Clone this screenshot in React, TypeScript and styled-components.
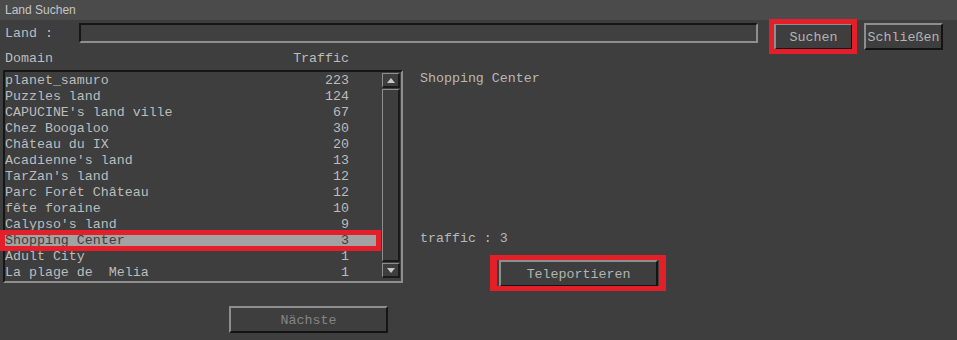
import React from "react";
import styled, { createGlobalStyle } from "styled-components";

const Global = createGlobalStyle`
  html, body { margin: 0; padding: 0; background: #3e3e3e; }
  body { width: 957px; height: 340px; overflow: hidden; }
`;

const mono = `"Liberation Mono", "Courier New", monospace`;

const Window = styled.div`
  width: 957px;
  height: 340px;
  background: #3e3e3e;
  display: flex;
  flex-direction: column;
  font-family: ${mono};
  font-size: 13.3px;
  color: #bcbcbc;
`;

const TitleBar = styled.div`
  height: 20px;
  line-height: 21px;
  background: #4b4b4b;
  padding-left: 5px;
  font-family: "Liberation Sans", Arial, sans-serif;
  font-size: 12px;
  color: #c6c6c6;
`;

const SearchRow = styled.div`
  display: flex;
  align-items: flex-start;
  padding: 3px 0 0 5px;
  height: 27px;
`;

const Label = styled.div`
  width: 74px;
  height: 20px;
  line-height: 22px;
`;

const TextInput = styled.div`
  box-sizing: border-box;
  width: 679px;
  height: 20px;
  background: #404040;
  border-style: solid;
  border-width: 2px;
  border-color: #161616 #8e8e8e #8e8e8e #161616;
`;

const Button = styled.button<{ $w: number; $ml: number; $dim?: boolean }>`
  position: relative;
  box-sizing: border-box;
  width: ${(p) => p.$w}px;
  height: 27px;
  margin-left: ${(p) => p.$ml}px;
  padding: 1px 0 0;
  background: #3e3e3e;
  border-style: solid;
  border-width: 2px;
  border-color: #8e8e8e #141414 #141414 #8e8e8e;
  font-family: ${mono};
  font-size: 13.3px;
  color: ${(p) => (p.$dim ? "#858585" : "#b4b4b4")};
  white-space: nowrap;
`;

const Highlight = styled.span<{ $t: number; $r: number; $b: number; $l: number; $bw?: string }>`
  position: absolute;
  top: ${(p) => -p.$t}px;
  right: ${(p) => -p.$r}px;
  bottom: ${(p) => -p.$b}px;
  left: ${(p) => -p.$l}px;
  border: solid #e3202a;
  border-width: ${(p) => p.$bw ?? "5px"};
  pointer-events: none;
`;

const Main = styled.div`
  display: flex;
  padding-left: 3px;
  gap: 17px;
`;

const LeftColumn = styled.div`
  width: 400px;
  display: flex;
  flex-direction: column;
`;

const HeaderRow = styled.div`
  height: 16px;
  line-height: 18px;
  display: flex;
  justify-content: space-between;
  padding: 0 54px 0 2px;
  color: #bcbcbc;
`;

const ListBox = styled.div`
  box-sizing: border-box;
  margin-top: 4px;
  height: 213px;
  border-style: solid;
  border-width: 2px;
  border-color: #161616 #8e8e8e #8e8e8e #161616;
  display: flex;
`;

const Rows = styled.div`
  flex: 1;
  display: flex;
  flex-direction: column;
`;

const Row = styled.div<{ $selected?: boolean }>`
  position: relative;
  height: 16px;
  line-height: 18px;
  display: flex;
  justify-content: space-between;
  padding-right: 31px;
  white-space: pre;
  background: ${(p) => (p.$selected ? "#a2a2a2" : "transparent")};
  color: ${(p) => (p.$selected ? "#3c3c3c" : "#bcbcbc")};
`;

const ScrollBar = styled.div`
  width: 18px;
  margin: 1px 1px 3px 2px;
  display: flex;
  flex-direction: column;
`;

const ScrollButton = styled.div`
  box-sizing: border-box;
  height: 15px;
  border-style: solid;
  border-width: 1px 2px 2px 1px;
  border-color: #8e8e8e #1a1a1a #1a1a1a #8e8e8e;
  display: flex;
  align-items: center;
  justify-content: center;
`;

const Track = styled.div`
  box-sizing: border-box;
  flex: 1;
  margin: 1px 0;
  border-style: solid;
  border-width: 1px 2px 2px 1px;
  border-color: #8e8e8e #1a1a1a #1a1a1a #8e8e8e;
`;

const NextButton = styled(Button)`
  margin-top: 23px;
`;

const Detail = styled.div`
  display: flex;
  flex-direction: column;
  padding-top: 20px;
  color: #b8b8b8;
`;

const DetailLine = styled.div<{ $mt?: number }>`
  height: 16px;
  line-height: 18px;
  margin-top: ${(p) => p.$mt ?? 0}px;
  white-space: pre;
`;

const TeleportButton = styled(Button)`
  margin-top: 14px;
`;

const Arrow = ({ up }: { up?: boolean }) => (
  <svg width="8" height="5" viewBox="0 0 8 5">
    <polygon points={up ? "0,5 8,5 4,0" : "0,0 8,0 4,5"} fill="#c8c8c8" />
  </svg>
);

const lands: [string, number][] = [
  ["planet_samuro", 223],
  ["Puzzles land", 124],
  ["CAPUCINE's land ville", 67],
  ["Chez Boogaloo", 30],
  ["Château du IX", 20],
  ["Acadienne's land", 13],
  ["TarZan's land", 12],
  ["Parc Forêt Château", 12],
  ["fête foraine", 10],
  ["Calypso's land", 9],
  ["Shopping Center", 3],
  ["Adult City", 1],
  ["La plage de  Melia", 1],
];

export default function App() {
  return (
    <>
      <Global />
      <Window>
        <TitleBar>Land Suchen</TitleBar>
        <SearchRow>
          <Label>Land :</Label>
          <TextInput />
          <Button $w={79} $ml={16}>
            Suchen
            <Highlight $t={6} $r={6} $b={6} $l={7} />
          </Button>
          <Button $w={79} $ml={11}>Schließen</Button>
        </SearchRow>
        <Main>
          <LeftColumn>
            <HeaderRow>
              <span>Domain</span>
              <span>Traffic</span>
            </HeaderRow>
            <ListBox>
              <Rows>
                {lands.map(([name, n], i) => (
                  <Row key={i} $selected={i === 10}>
                    <span>{name}</span>
                    <span>{n}</span>
                    {i === 10 && <Highlight $t={2} $r={1} $b={3} $l={5} />}
                  </Row>
                ))}
              </Rows>
              <ScrollBar>
                <ScrollButton>
                  <Arrow up />
                </ScrollButton>
                <Track />
                <ScrollButton>
                  <Arrow />
                </ScrollButton>
              </ScrollBar>
            </ListBox>
            <NextButton $w={159} $ml={226} $dim>
              Nächste
            </NextButton>
          </LeftColumn>
          <Detail>
            <DetailLine>Shopping Center</DetailLine>
            <DetailLine $mt={144}>traffic : 3</DetailLine>
            <TeleportButton $w={159} $ml={79}>
              Teleportieren
              <Highlight $t={7} $r={10} $b={6} $l={11} $bw="5px 7px" />
            </TeleportButton>
          </Detail>
        </Main>
      </Window>
    </>
  );
}
